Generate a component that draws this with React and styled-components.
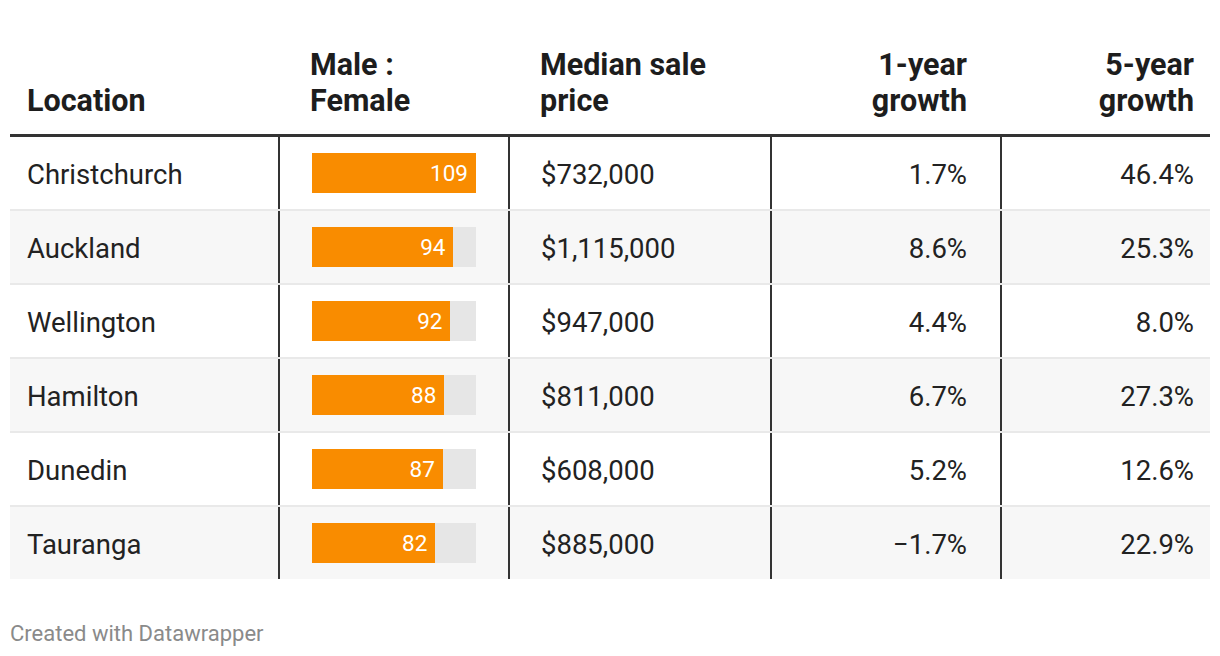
import React from 'react';
import styled, { createGlobalStyle } from 'styled-components';

const GlobalStyle = createGlobalStyle`
  body {
    margin: 0;
    background: #ffffff;
    font-family: Roboto, "Liberation Sans", Arial, sans-serif;
    color: #222222;
  }
`;

const COLUMNS = '268px 230px 262px 230px 210px';
const BAR_MAX = 109;

const Page = styled.div`
  width: 1200px;
  padding: 47px 10px 0;
`;

const HeaderRow = styled.div`
  display: grid;
  grid-template-columns: ${COLUMNS};
  border-bottom: 3px solid #333333;
`;

const HeadCell = styled.div`
  display: flex;
  align-items: flex-end;
  justify-content: ${(p) => (p.$right ? 'flex-end' : 'flex-start')};
  text-align: ${(p) => (p.$right ? 'right' : 'left')};
  padding: 0 ${(p) => p.$pr}px 15px ${(p) => p.$pl}px;
  font-size: 30.5px;
  line-height: 36px;
  font-weight: 700;
  color: #1d1d1d;
`;

const BodyRow = styled.div`
  display: grid;
  grid-template-columns: ${COLUMNS};
  height: 72px;
  background: ${(p) => (p.$alt ? '#f7f7f7' : '#ffffff')};
  border-bottom: ${(p) => (p.$last ? 'none' : '2px solid #e9e9e9')};
`;

const Cell = styled.div`
  display: flex;
  align-items: center;
  justify-content: ${(p) => (p.$right ? 'flex-end' : 'flex-start')};
  padding: 2px ${(p) => p.$pr}px 0 ${(p) => p.$pl}px;
  border-left: ${(p) => (p.$divider ? '2px solid #333333' : 'none')};
  font-size: 27.5px;
  color: #222222;
`;

const BarTrack = styled.div`
  width: 164px;
  height: 40px;
  margin-top: -2px;
  background: #e6e6e6;
`;

const BarFill = styled.div`
  height: 40px;
  background: #f98c00;
  color: #ffffff;
  font-size: 22.5px;
  line-height: 40px;
  text-align: right;
  padding-right: 8px;
  box-sizing: border-box;
`;

const Footer = styled.div`
  margin-top: 42px;
  font-size: 22px;
  line-height: 26px;
  color: #8a8a8a;
`;

const rows = [
  { loc: 'Christchurch', ratio: 109, price: '$732,000', one: '1.7%', five: '46.4%' },
  { loc: 'Auckland', ratio: 94, price: '$1,115,000', one: '8.6%', five: '25.3%' },
  { loc: 'Wellington', ratio: 92, price: '$947,000', one: '4.4%', five: '8.0%' },
  { loc: 'Hamilton', ratio: 88, price: '$811,000', one: '6.7%', five: '27.3%' },
  { loc: 'Dunedin', ratio: 87, price: '$608,000', one: '5.2%', five: '12.6%' },
  { loc: 'Tauranga', ratio: 82, price: '$885,000', one: '\u22121.7%', five: '22.9%' },
];

const App = () => {
  return (
    <>
      <GlobalStyle />
      <Page>
        <HeaderRow>
          <HeadCell $pl={17} $pr={16}>Location</HeadCell>
          <HeadCell $pl={32} $pr={16}>Male :<br />Female</HeadCell>
          <HeadCell $pl={32} $pr={16}>Median sale<br />price</HeadCell>
          <HeadCell $right $pl={16} $pr={33}>1-year<br />growth</HeadCell>
          <HeadCell $right $pl={16} $pr={16}>5-year<br />growth</HeadCell>
        </HeaderRow>

        {rows.map((r, i) => (
          <BodyRow key={r.loc} $alt={i % 2 === 1} $last={i === rows.length - 1}>
            <Cell $pl={17} $pr={16}>{r.loc}</Cell>
            <Cell $divider $pl={32} $pr={16}>
              <BarTrack>
                {/* bar width from data, scaled to the largest ratio */}
                <BarFill style={{ width: `${(r.ratio / BAR_MAX) * 100}%` }}>{r.ratio}</BarFill>
              </BarTrack>
            </Cell>
            <Cell $divider $pl={31} $pr={16}>{r.price}</Cell>
            <Cell $divider $right $pl={16} $pr={33}>{r.one}</Cell>
            <Cell $divider $right $pl={16} $pr={16}>{r.five}</Cell>
          </BodyRow>
        ))}

        <Footer>Created with Datawrapper</Footer>
      </Page>
    </>
  );
};

export default App;
